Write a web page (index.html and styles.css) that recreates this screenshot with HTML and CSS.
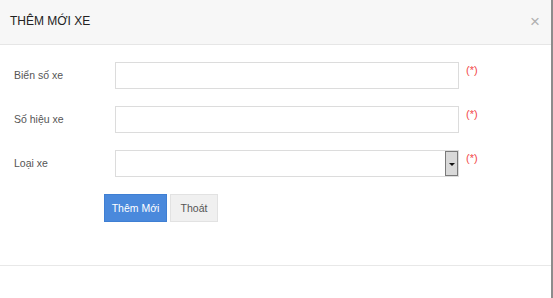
FILE: index.html
```
<!DOCTYPE html>
<html lang="vi">

<head>
    <meta charset="UTF-8">
    <meta name="viewport" content="width=device-width, initial-scale=1.0">
    <title>Thêm mới xe</title>
    <link rel="stylesheet" href="styles.css">
</head>

<body>
    <div class="modal">
        <div class="modal_header">
            <h4 class="modal_title">THÊM MỚI XE</h4>
            <span class="close_btn">&times;</span>
        </div>
        <div class="modal_body">
            <form action="">
                <div class="form_row">
                    <label for="bien_so">Biển số xe</label>
                    <input type="text" id="bien_so" name="bien_so">
                    <span class="required">(*)</span>
                </div>
                <div class="form_row">
                    <label for="so_hieu">Số hiệu xe</label>
                    <input type="text" id="so_hieu" name="so_hieu">
                    <span class="required">(*)</span>
                </div>
                <div class="form_row">
                    <label for="loai_xe">Loại xe</label>
                    <div class="select_box">
                        <span class="select_arrow"></span>
                    </div>
                    <span class="required">(*)</span>
                </div>
                <div class="form_buttons">
                    <button type="button" class="btn btn_primary">Thêm Mới</button>
                    <button type="button" class="btn btn_default">Thoát</button>
                </div>
            </form>
        </div>
        <div class="modal_footer"></div>
    </div>
</body>

</html>
```

FILE: styles.css
```
body {
    margin: 0;
    font-family: "Liberation Sans", Arial, sans-serif;
    background-color: white;
}

.modal {
    height: 298px;
    border-right: 2px solid #8c8c8c;
    box-sizing: border-box;
}

.modal_header {
    height: 45px;
    background-color: #f7f7f7;
    border-bottom: 1px solid #e6e6e6;
    box-sizing: border-box;
    display: flex;
    align-items: center;
    justify-content: space-between;
    padding: 0 11px 2px 10px;
}

.modal_title {
    margin: 0;
    font-size: 12px;
    font-weight: normal;
    color: #222;
}

.close_btn {
    font-size: 17px;
    color: #b0b0b0;
    line-height: 1;
}

.modal_body {
    padding: 17px 0 0 0;
    height: 221px;
    box-sizing: border-box;
    border-bottom: 1px solid #e8e8e8;
}

.form_row {
    display: flex;
    align-items: flex-start;
    margin-bottom: 17px;
}

.form_row>label {
    width: 101px;
    padding-left: 14px;
    font-size: 10.5px;
    color: #555;
    line-height: 27px;
}

.form_row>input,
.select_box {
    width: 344px;
    height: 27px;
    box-sizing: border-box;
    border: 1px solid #dcdcdc;
    margin: 0;
    padding: 0;
    background-color: white;
}

.select_box {
    display: flex;
    justify-content: flex-end;
}

.select_arrow {
    width: 13px;
    height: 25px;
    box-sizing: border-box;
    border: 1px solid #7a7a7a;
    background-color: #d9d9d9;
    position: relative;
}

.select_arrow::after {
    content: "";
    position: absolute;
    left: 3px;
    top: 11px;
    border-left: 3px solid transparent;
    border-right: 3px solid transparent;
    border-top: 3px solid #111;
}

.required {
    margin-left: 7px;
    margin-top: 2px;
    font-size: 11px;
    color: #f24a4a;
}

.form_buttons {
    display: flex;
    gap: 3px;
    padding-left: 104px;
}

.btn {
    height: 28px;
    font-family: "Liberation Sans", Arial, sans-serif;
    font-size: 10.5px;
    border: 1px solid transparent;
    padding: 0;
}

.btn_primary {
    width: 63px;
    background-color: #4a89dc;
    border-color: #3f7fd3;
    color: white;
}

.btn_default {
    width: 48px;
    background-color: #f0f0f0;
    border-color: #e2e2e2;
    color: #555;
}
```
